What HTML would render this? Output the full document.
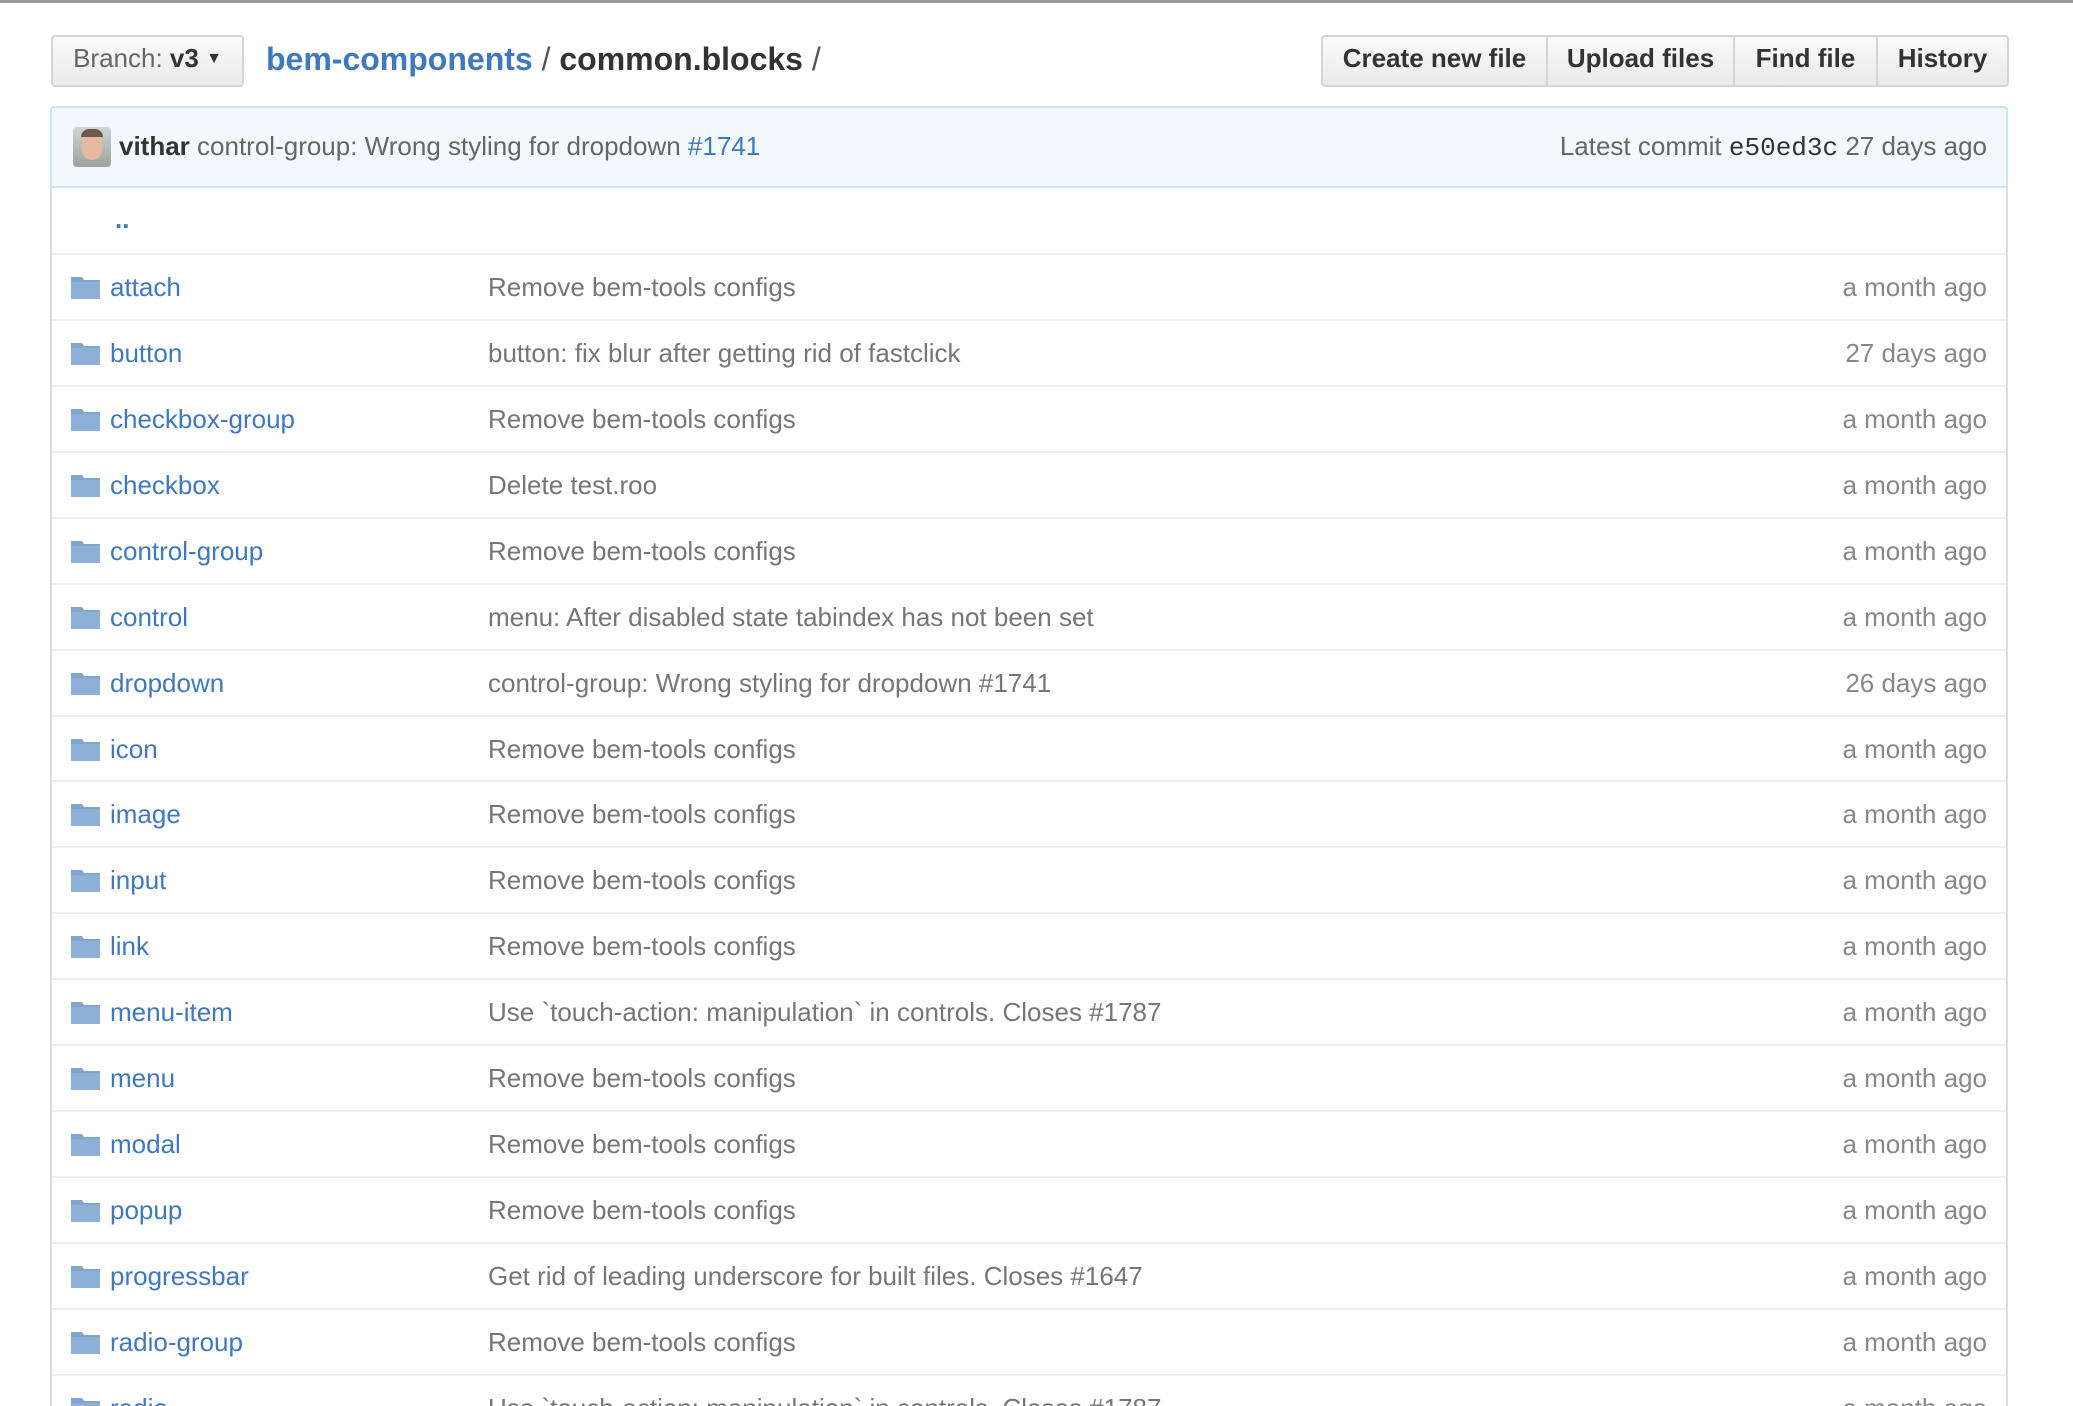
<!DOCTYPE html>
<html style="overflow:hidden;height:1406px"><head><meta charset="utf-8"><style>
html,body{margin:0}
#w{width:2073px;height:1406px;overflow:hidden;background:#fff;font-family:"Liberation Sans",Arial,sans-serif;position:relative;border-top:3px solid #9a9a9a;box-sizing:border-box}
.a{position:absolute}
.btn{background:linear-gradient(#fafafa,#eaeaea);border:2px solid #d5d5d5;box-sizing:border-box;font-size:26px;color:#333;display:flex;align-items:center;justify-content:center;padding-bottom:5px}
.crumb{font-size:32px;font-weight:bold;color:#333;white-space:nowrap}
.box{left:50px;width:1958px;top:103px;height:1310px;border:2px solid #ddd;border-bottom:none;border-radius:4px 4px 0 0;box-sizing:border-box}
.commit{left:50px;width:1958px;top:103px;height:82px;background:#f2f9fc;border:2px solid #c9e6f2;border-radius:4px 4px 0 0;box-sizing:border-box;font-size:26px;color:#666}
.row{position:absolute;left:52px;width:1954px;height:66px;border-top:2px solid #eee;box-sizing:border-box;font-size:26px}
.row .n{position:absolute;left:58px;top:0;line-height:64px;color:#4078c0}
.row .m{position:absolute;left:436px;top:0;line-height:64px;color:#767676;white-space:nowrap}
.row .t{position:absolute;right:19px;top:0;line-height:64px;color:#888}
.row svg{position:absolute;left:19px;top:20px}
</style></head><body><div id="w">
<div class="a btn" style="left:51px;top:32px;width:193px;height:52px;border-radius:4px;color:#666">Branch:&nbsp;<b style="color:#333">v3</b>&nbsp;<span style="font-size:16px;color:#333">▼</span></div>
<div class="a crumb" style="left:266px;top:38px"><span style="color:#4078c0">bem-components</span> <span style="font-weight:normal;color:#555">/</span> common.blocks <span style="font-weight:normal;color:#555">/</span></div>
<div class="a" style="left:1321px;top:32px;height:52px;display:flex;font-weight:bold">
<div class="btn" style="width:227px;border-radius:4px 0 0 4px;font-weight:bold">Create new file</div>
<div class="btn" style="width:187px;border-left:none;font-weight:bold">Upload files</div>
<div class="btn" style="width:143px;border-left:none;font-weight:bold">Find file</div>
<div class="btn" style="width:131px;border-left:none;border-radius:0 4px 4px 0;font-weight:bold">History</div>
</div>
<div class="a box"></div>
<div class="a commit">
<div class="a" style="left:21px;top:19px;width:38px;height:40px;border-radius:4px;background:linear-gradient(#cfd6d4,#9aa3a0);overflow:hidden"><div style="position:absolute;left:9px;top:5px;width:20px;height:28px;border-radius:10px;background:#e6b9a0"></div><div style="position:absolute;left:8px;top:2px;width:22px;height:8px;border-radius:8px 8px 0 0;background:#6b5a4c"></div></div>
<div class="a" style="left:67px;top:22px;line-height:32px;white-space:nowrap"><b style="color:#333">vithar</b> control-group: Wrong styling for dropdown <span style="color:#4078c0">#1741</span></div>
<div class="a" style="right:19px;top:22px;line-height:32px;white-space:nowrap">Latest commit <span style="font-family:'Liberation Mono',monospace;color:#333;font-size:26px">e50ed3c</span> 27 days ago</div>
</div>
<div class="a" style="left:115px;top:201px;font-size:26px;color:#4078c0;font-weight:bold">..</div>
<div id="rows"></div>
</div>
<script>
var d=[["attach","Remove bem-tools configs","a month ago"],["button","button: fix blur after getting rid of fastclick","27 days ago"],["checkbox-group","Remove bem-tools configs","a month ago"],["checkbox","Delete test.roo","a month ago"],["control-group","Remove bem-tools configs","a month ago"],["control","menu: After disabled state tabindex has not been set","a month ago"],["dropdown","control-group: Wrong styling for dropdown #1741","26 days ago"],["icon","Remove bem-tools configs","a month ago"],["image","Remove bem-tools configs","a month ago"],["input","Remove bem-tools configs","a month ago"],["link","Remove bem-tools configs","a month ago"],["menu-item","Use `touch-action: manipulation` in controls. Closes #1787","a month ago"],["menu","Remove bem-tools configs","a month ago"],["modal","Remove bem-tools configs","a month ago"],["popup","Remove bem-tools configs","a month ago"],["progressbar","Get rid of leading underscore for built files. Closes #1647","a month ago"],["radio-group","Remove bem-tools configs","a month ago"],["radio","Use `touch-action: manipulation` in controls. Closes #1787","a month ago"]];
var h="";
d.forEach(function(r,i){h+='<div class="row" style="top:'+(250+65.93*i).toFixed(1)+'px"><svg width="29" height="24" viewBox="0 0 29 24"><path d="M0 2h11l2 3h16v19H0z" fill="#80a6cd"/><rect x="0" y="7" width="29" height="17" fill="#8cb0d6"/></svg><span class="n">'+r[0]+'</span><span class="m">'+r[1]+'</span><span class="t">'+r[2]+'</span></div>';});
document.getElementById("rows").innerHTML=h;
</script>
</body></html>
